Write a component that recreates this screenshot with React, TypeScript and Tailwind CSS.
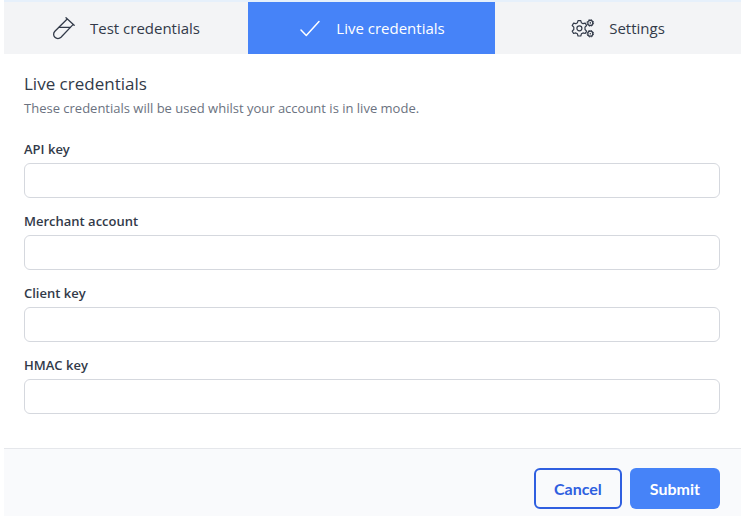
import { useState } from "react";
import clsx from "clsx";

function TestTubeIcon() {
  return (
    <svg viewBox="0 0 24 24" className="size-6" fill="none" stroke="currentColor" strokeWidth="1.3" strokeLinecap="round" strokeLinejoin="round" aria-hidden="true">
      <path d="M14 1.800l8.200 7.400M15.200 3L2.900 15.200a4.300 4.300 0 0 0 6.100 6.100L21 8.600" />
      <path d="M7 11.400h11.200" />
    </svg>
  );
}

function CheckIcon() {
  return (
    <svg viewBox="0 0 24 24" className="size-6" fill="none" stroke="currentColor" strokeWidth="1.5" strokeLinecap="round" strokeLinejoin="round" aria-hidden="true">
      <path d="M3 14l5.3 5.5L21 5.5" />
    </svg>
  );
}

function GearsIcon() {
  return (
    <svg viewBox="0 -1 24 24" className="size-6" fill="none" stroke="currentColor" strokeWidth="1.2" strokeLinejoin="round" aria-hidden="true">
      <path d="M7 3.600h2.800l.6 2.200 1.600.9 2.200-.6 1.400 2.400-1.600 1.600v2.400l1.600 1.600-1.400 2.400-2.200-.6-1.600.9-.6 2.200H7l-.6-2.200-1.600-.9-2.200.6-1.400-2.400 1.600-1.600v-2.400L1.200 8.500l1.400-2.400 2.200.6 1.600-.9z" />
      <circle cx="8.4" cy="11.3" r="2.5" />
      <circle cx="19.3" cy="5.9" r="2.5" />
      <circle cx="19.3" cy="5.9" r="3.3" strokeWidth="1" strokeDasharray="1.500 1.090" />
      <circle cx="19.3" cy="5.9" r="0.8" fill="currentColor" stroke="none" />
      <circle cx="19.3" cy="16.7" r="2.5" />
      <circle cx="19.3" cy="16.7" r="3.3" strokeWidth="1" strokeDasharray="1.500 1.090" />
      <circle cx="19.3" cy="16.7" r="0.8" fill="currentColor" stroke="none" />
    </svg>
  );
}

const tabs = [
  { id: "test", label: "Test credentials", icon: TestTubeIcon },
  { id: "live", label: "Live credentials", icon: CheckIcon },
  { id: "settings", label: "Settings", icon: GearsIcon },
];

const fields = [
  { id: "api-key", label: "API key" },
  { id: "merchant-account", label: "Merchant account" },
  { id: "client-key", label: "Client key" },
  { id: "hmac-key", label: "HMAC key" },
];

export default function App() {
  const [active, setActive] = useState("live");

  return (
    <div className="ml-1 mr-px bg-white font-['Open_Sans',sans-serif] text-[#323a49]">
      <div role="tablist" className="grid grid-cols-[244fr_247fr_246fr] border-t-2 border-[#e6f0fb] bg-[#f3f4f6]">
        {tabs.map(({ id, label, icon: Icon }) => (
          <button
            key={id}
            type="button"
            role="tab"
            aria-selected={active === id}
            onClick={() => setActive(id)}
            className={clsx(
              "flex h-13 items-center justify-center gap-3.5 text-[15px]",
              active === id && "bg-[#4683f8] text-white"
            )}
          >
            <Icon />
            {label}
          </button>
        ))}
      </div>

      <form onSubmit={(e) => e.preventDefault()}>
        <div className="pt-5 pr-[21px] pb-[34px] pl-5">
          <h1 className="text-[17px] leading-5">Live credentials</h1>
          <p className="mt-1 text-[13px] leading-5 text-[#6b7280]">
            These credentials will be used whilst your account is in live mode.
          </p>
          <div className="mt-[21px] flex flex-col gap-[13px]">
            {fields.map((field) => (
              <div key={field.id}>
                <label htmlFor={field.id} className="block text-[13px] leading-5 font-semibold">
                  {field.label}
                </label>
                <input
                  id={field.id}
                  type="text"
                  className="mt-1 block h-[35px] w-full rounded-md border border-[#d5d8de] bg-white px-3 text-sm"
                />
              </div>
            ))}
          </div>
        </div>

        <div className="flex justify-end gap-2 border-t border-[#e5e7eb] bg-[#f9fafc] pt-[19px] pr-[21px] pb-2 pl-5 font-['Lato',sans-serif] text-base font-bold">
          <button type="button" className="h-[41px] rounded-md border-2 border-[#2f5fe0] px-[18px] text-[#2f5fe0]">
            Cancel
          </button>
          <button type="submit" className="h-[41px] rounded-md bg-[#4683f8] px-5 text-white">
            Submit
          </button>
        </div>
      </form>
    </div>
  );
}
